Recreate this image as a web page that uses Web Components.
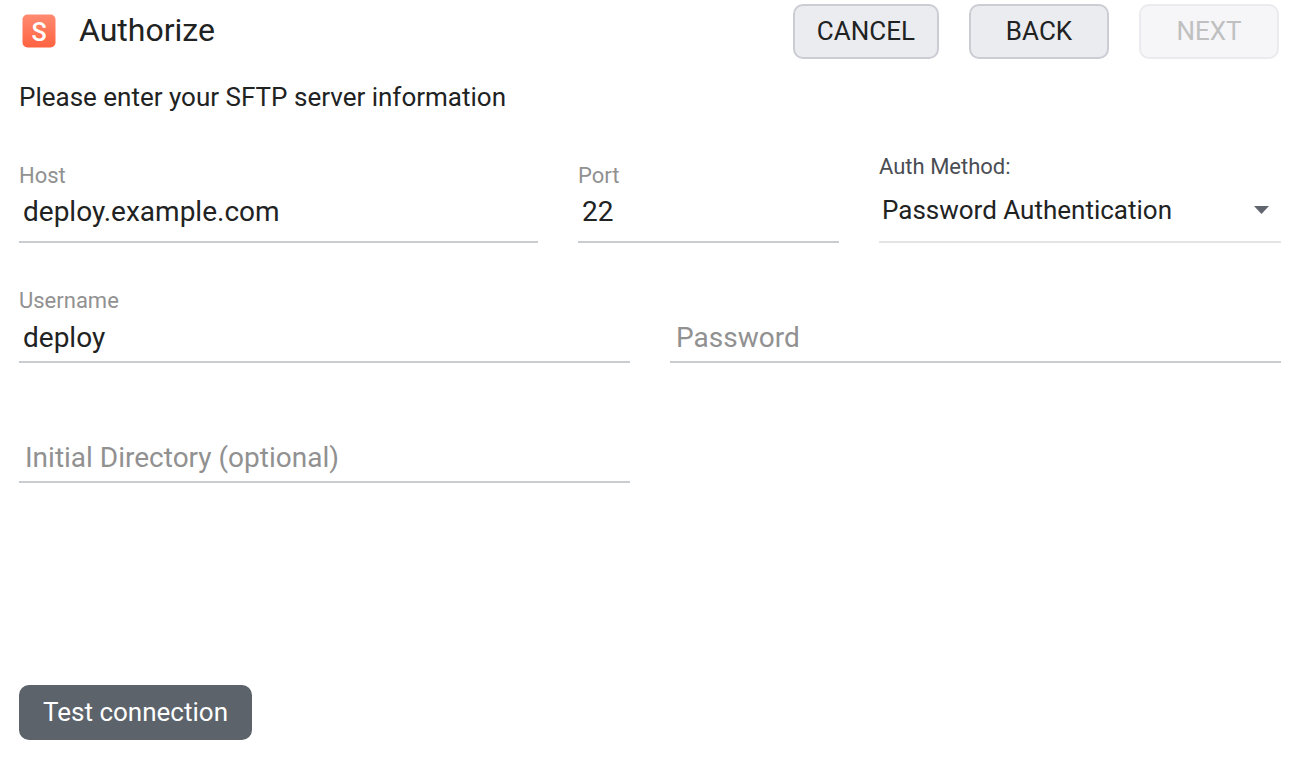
<!DOCTYPE html>
<html lang="en">
<head>
<meta charset="utf-8">
<meta name="viewport" content="width=device-width, initial-scale=1">
<title>Authorize</title>
<style>
  body { margin: 0; background: #fff; color: #212222; font-family: Roboto, "Liberation Sans", sans-serif; }
</style>
</head>
<body>
<auth-page></auth-page>

<script>
const define = (name, html, setup) => {
  const template = document.createElement('template');
  template.innerHTML = html;
  customElements.define(name, class extends HTMLElement {
    constructor() {
      super();
      this.attachShadow({ mode: 'open' }).append(template.content.cloneNode(true));
    }
    connectedCallback() {
      if (setup && !this.ready) { this.ready = true; setup(this, this.shadowRoot); }
    }
  });
};

define('app-logo', `
  <style>
    :host { display: block; flex: none; }
    svg { display: block; }
  </style>
  <svg width="34" height="34" viewBox="0 0 34 34" aria-hidden="true">
    <defs><linearGradient id="g" x1="0" y1="0" x2="0" y2="1">
      <stop offset="0" stop-color="#ff8a70"/><stop offset="1" stop-color="#ff6341"/>
    </linearGradient></defs>
    <rect x=".5" y=".5" width="33" height="33" rx="5" fill="url(#g)"/>
    <text x="17" y="26.5" text-anchor="middle" font-size="25" font-weight="500" fill="#fff" font-family="Roboto, sans-serif">S</text>
  </svg>`);

define('app-button', `
  <style>
    :host { display: block; flex: none; }
    button {
      box-sizing: border-box; min-width: 140px; height: 55px; padding: 0 22px 2px;
      border: 2px solid #cbccd4; border-radius: 10px; background: #ebecf0;
      color: #212222; font: 400 26px/32px Roboto, "Liberation Sans", sans-serif;
      display: block; cursor: pointer;
    }
    button:disabled { border-color: #ebebef; background: #f6f6f9; color: #c0c0c0; cursor: default; }
    :host([primary]) button { border-color: #5c636b; background: #5c636b; color: #fff; }
  </style>
  <button type="button"><slot></slot></button>`, (host, root) => {
  root.querySelector('button').disabled = host.hasAttribute('disabled');
});

define('page-header', `
  <style>
    :host { display: flex; align-items: flex-start; gap: 23px; padding: 4px 2px 0 3px; }
    app-logo { margin-top: 10px; }
    h1 { margin: 0; padding-top: 6px; flex: 1; font-size: 32px; line-height: 40px; font-weight: 400; }
    nav { display: flex; gap: 30px; }
  </style>
  <app-logo></app-logo>
  <h1><slot></slot></h1>
  <nav aria-label="Steps"><slot name="actions"></slot></nav>`);

define('text-field', `
  <style>
    :host { display: block; min-width: 0; }
    label { display: block; height: 26px; font-size: 22px; line-height: 28px; color: #919191; }
    input {
      box-sizing: border-box; display: block; width: 100%; height: 50px; margin: 0; padding: 0 4px;
      border: 0; border-bottom: 2px solid #c9ccd1; border-radius: 0; outline: 0; background: none;
      color: #212222; font: 400 28px/34px Roboto, "Liberation Sans", sans-serif;
    }
    input::placeholder { color: #919191; opacity: 1; }
    :host([tall]) input { height: 55px; padding-bottom: 7px; }
    :host([placeholder]) input { padding-left: 6px; }
  </style>
  <label for="control"></label>
  <input id="control">`, (host, root) => {
  const input = root.querySelector('input');
  input.type = host.getAttribute('type') || 'text';
  input.value = host.getAttribute('value') || '';
  if (host.hasAttribute('placeholder')) {
    input.placeholder = host.getAttribute('placeholder');
    input.setAttribute('aria-label', input.placeholder);
  }
  root.querySelector('label').textContent = host.getAttribute('label') || '';
});

define('select-field', `
  <style>
    :host { display: block; min-width: 0; }
    label { display: block; font-size: 22px; line-height: 26px; color: #4a4d53; }
    .box { display: grid; align-items: center; padding-bottom: 2px; border-bottom: 2px solid #e4e4e6; }
    select, svg { grid-area: 1 / 1; }
    select {
      appearance: none; width: 100%; height: 59px; margin: 0; padding: 0 40px 0 3px; border: 0;
      background: none; color: #212222; font: 400 26px/32px Roboto, "Liberation Sans", sans-serif;
    }
    svg { justify-self: end; margin-right: 12px; pointer-events: none; }
  </style>
  <label for="control"></label>
  <div class="box">
    <select id="control"></select>
    <svg width="15" height="8" viewBox="0 0 15 8" aria-hidden="true"><path d="M0 0h15L7.5 8z" fill="#61656d"/></svg>
  </div>`, (host, root) => {
  root.querySelector('label').textContent = host.getAttribute('label');
  root.querySelector('select').add(new Option(host.getAttribute('value')));
});

define('field-row', `
  <style>
    :host { display: grid; grid-template-columns: 1fr 1fr; column-gap: 40px; align-items: end; }
    :host([columns="3"]) { grid-template-columns: 519fr 261fr 402fr; }
  </style>
  <slot></slot>`);

define('auth-page', `
  <style>
    :host { box-sizing: border-box; display: flex; flex-direction: column; min-height: 100vh; padding: 0 19px 40px; }
    main { flex: 1; padding-bottom: 40px; }
    p { margin: 22px 0 41px; font-size: 26px; line-height: 32px; }
    form { display: grid; gap: 44px; }
    footer { display: flex; }
  </style>
  <page-header>Authorize
    <app-button slot="actions">CANCEL</app-button>
    <app-button slot="actions">BACK</app-button>
    <app-button slot="actions" disabled>NEXT</app-button>
  </page-header>
  <main>
    <p>Please enter your SFTP server information</p>
    <form>
      <field-row columns="3">
        <text-field tall label="Host" value="deploy.example.com"></text-field>
        <text-field tall label="Port" value="22"></text-field>
        <select-field label="Auth Method:" value="Password Authentication"></select-field>
      </field-row>
      <field-row>
        <text-field label="Username" value="deploy"></text-field>
        <text-field type="password" placeholder="Password"></text-field>
      </field-row>
      <field-row>
        <text-field placeholder="Initial Directory (optional)"></text-field>
      </field-row>
    </form>
  </main>
  <footer><app-button primary>Test connection</app-button></footer>`);
</script>
</body>
</html>
